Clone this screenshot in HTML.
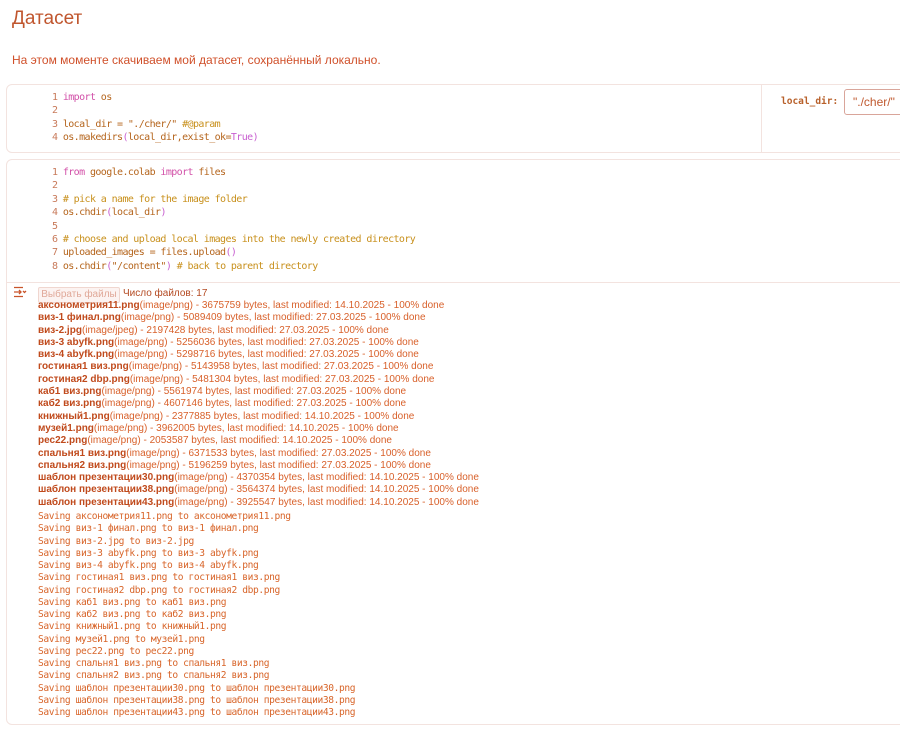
<!DOCTYPE html>
<html><head><meta charset="utf-8"><style>
body{margin:0;background:#fff;width:900px;height:737px;overflow:hidden;font-family:"Liberation Sans",sans-serif;color:#c9542a;position:relative}
.h{position:absolute;left:12px;top:8px;font-size:19px;color:#c0562e}
.p{position:absolute;left:12px;top:53px;font-size:12px;color:#d0502a}
.cell{position:absolute;left:6px;right:-10px;border:1px solid #f3e3df;border-radius:6px;background:#fff}
.code{position:absolute;font-family:"DejaVu Sans Mono","Liberation Mono",monospace;font-size:10px;letter-spacing:-0.6px;line-height:13.4px;white-space:pre;color:#b5651d}
.ln{color:#c87a5a}
.k{color:#d250a8}
.c{color:#c8901c}
.t{color:#c85fd0}
.out{position:absolute;left:38px;top:300px;font-size:10px;line-height:12.3px;white-space:pre;color:#d8602a}
.out b{color:#c04a1c}
.sv{position:absolute;left:38px;top:511px;font-family:"DejaVu Sans Mono","Liberation Mono",monospace;font-size:9.6px;letter-spacing:-0.4px;line-height:12.25px;white-space:pre;color:#d8652a}
</style></head><body>
<div class="h">Датасет</div>
<div class="p">На этом моменте скачиваем мой датасет, сохранённый локально.</div>
<div class="cell" style="top:84px;height:67px">
<div style="position:absolute;left:754px;top:0;bottom:0;border-left:1px solid #f3e3df"></div>
<div style="position:absolute;left:774px;top:11px;font-family:'DejaVu Sans Mono',monospace;font-size:9.5px;font-weight:bold;color:#b8602a">local_dir:</div>
<div style="position:absolute;left:837px;top:4px;width:80px;height:24px;border:1px solid #d9a59a;border-radius:3px;font-size:12px;line-height:24px;padding-left:8px;color:#c05a30">"./cher/"</div>
</div>
<div class="code" style="left:52px;top:91px"><span class="ln">1</span> <span class="k">import</span> os
<span class="ln">2</span>
<span class="ln">3</span> local_dir = "./cher/" <span class="c">#@param</span>
<span class="ln">4</span> os.makedirs<span class="t">(</span>local_dir,exist_ok=<span class="t">True)</span></div>
<div class="cell" style="top:159px;height:564px">
<div style="position:absolute;left:0;right:0;top:122px;border-top:1px solid #f3e3df"></div>
</div>
<div class="code" style="left:52px;top:166px"><span class="ln">1</span> <span class="k">from</span> google.colab <span class="k">import</span> files
<span class="ln">2</span>
<span class="ln">3</span> <span class="c"># pick a name for the image folder</span>
<span class="ln">4</span> os.chdir<span class="t">(</span>local_dir<span class="t">)</span>
<span class="ln">5</span>
<span class="ln">6</span> <span class="c"># choose and upload local images into the newly created directory</span>
<span class="ln">7</span> uploaded_images = files.upload<span class="t">()</span>
<span class="ln">8</span> os.chdir<span class="t">(</span>"/content"<span class="t">)</span> <span class="c"># back to parent directory</span></div>
<svg style="position:absolute;left:13px;top:286px" width="14" height="12" viewBox="0 0 14 12" fill="none" stroke="#c9542a" stroke-width="1.3"><path d="M1 1.5h9M1 6h7M6 4l2 2-2 2M1 10.5h9M10 5l1.5 1.5L13 5"/></svg>
<div style="position:absolute;left:38px;top:287px;width:80px;height:14px;border:1px solid #f0d6cf;background:#fcf3f1;border-radius:2px;font-size:10px;line-height:14px;text-align:center;color:#e0a898">Выбрать файлы</div>
<div style="position:absolute;left:123px;top:288px;font-size:10px;color:#b44a22">Число файлов: 17</div>
<div class="out"><b>аксонометрия11.png</b>(image/png) - 3675759 bytes, last modified: 14.10.2025 - 100% done
<b>виз-1 финал.png</b>(image/png) - 5089409 bytes, last modified: 27.03.2025 - 100% done
<b>виз-2.jpg</b>(image/jpeg) - 2197428 bytes, last modified: 27.03.2025 - 100% done
<b>виз-3 abyfk.png</b>(image/png) - 5256036 bytes, last modified: 27.03.2025 - 100% done
<b>виз-4 abyfk.png</b>(image/png) - 5298716 bytes, last modified: 27.03.2025 - 100% done
<b>гостиная1 виз.png</b>(image/png) - 5143958 bytes, last modified: 27.03.2025 - 100% done
<b>гостиная2 dbp.png</b>(image/png) - 5481304 bytes, last modified: 27.03.2025 - 100% done
<b>каб1 виз.png</b>(image/png) - 5561974 bytes, last modified: 27.03.2025 - 100% done
<b>каб2 виз.png</b>(image/png) - 4607146 bytes, last modified: 27.03.2025 - 100% done
<b>книжный1.png</b>(image/png) - 2377885 bytes, last modified: 14.10.2025 - 100% done
<b>музей1.png</b>(image/png) - 3962005 bytes, last modified: 14.10.2025 - 100% done
<b>рес22.png</b>(image/png) - 2053587 bytes, last modified: 14.10.2025 - 100% done
<b>спальня1 виз.png</b>(image/png) - 6371533 bytes, last modified: 27.03.2025 - 100% done
<b>спальня2 виз.png</b>(image/png) - 5196259 bytes, last modified: 27.03.2025 - 100% done
<b>шаблон презентации30.png</b>(image/png) - 4370354 bytes, last modified: 14.10.2025 - 100% done
<b>шаблон презентации38.png</b>(image/png) - 3564374 bytes, last modified: 14.10.2025 - 100% done
<b>шаблон презентации43.png</b>(image/png) - 3925547 bytes, last modified: 14.10.2025 - 100% done</div>
<div class="sv">Saving аксонометрия11.png to аксонометрия11.png
Saving виз-1 финал.png to виз-1 финал.png
Saving виз-2.jpg to виз-2.jpg
Saving виз-3 abyfk.png to виз-3 abyfk.png
Saving виз-4 abyfk.png to виз-4 abyfk.png
Saving гостиная1 виз.png to гостиная1 виз.png
Saving гостиная2 dbp.png to гостиная2 dbp.png
Saving каб1 виз.png to каб1 виз.png
Saving каб2 виз.png to каб2 виз.png
Saving книжный1.png to книжный1.png
Saving музей1.png to музей1.png
Saving рес22.png to рес22.png
Saving спальня1 виз.png to спальня1 виз.png
Saving спальня2 виз.png to спальня2 виз.png
Saving шаблон презентации30.png to шаблон презентации30.png
Saving шаблон презентации38.png to шаблон презентации38.png
Saving шаблон презентации43.png to шаблон презентации43.png</div>
</body></html>
